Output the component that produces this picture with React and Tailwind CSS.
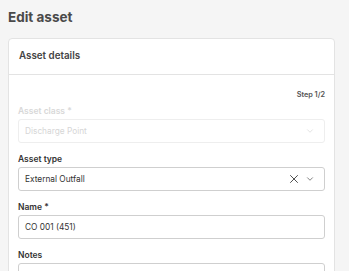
import { ChevronDown, X } from 'lucide-react'

function Field({ label, children }) {
  return (
    <div className="flex flex-col gap-[1px]">
      <label className="text-[8.5px] leading-[14px] font-semibold text-[#333333]">{label}</label>
      {children}
    </div>
  )
}

export default function App() {
  return (
    <div className="min-h-screen bg-[#f5f5f5] pl-2 pt-2 font-['Inter',sans-serif]">
      <h1 className="text-[13.5px] leading-[18px] font-bold text-[#4a4a4a]">Edit asset</h1>

      <div className="mt-3 w-[327px] bg-white border border-[#e3e3e3] rounded-[4px]">
        {/* Header */}
        <div className="h-[36px] flex items-center px-[10px] border-b border-[#e3e3e3]">
          <h2 className="text-[9.8px] font-semibold text-[#444444]">Asset details</h2>
        </div>

        {/* Body */}
        <div className="px-[9px] pt-[13px] pb-4 flex flex-col">
          <p className="text-right text-[7.3px] leading-[14px] font-semibold text-[#555555]">Step 1/2</p>

          <div className="mt-[2px] flex flex-col gap-[9px]">
            <div className="flex flex-col gap-[1px]">
              <label className="text-[8.5px] leading-[14px] font-semibold text-[#d8d8d8]">Asset class *</label>
              <div className="h-[24px] flex items-center justify-between pl-[6px] pr-[9px] border border-[#eeeeee] rounded-[3px]">
                <span className="text-[8.3px] text-[#d6d6d6]">Discharge Point</span>
                <ChevronDown className="w-[10px] h-[10px] text-[#dddddd]" strokeWidth={2} />
              </div>
            </div>

            <Field label="Asset type">
              <div className="h-[24px] flex items-center justify-between pl-[6px] pr-[9px] border border-[#cfcfcf] rounded-[3px]">
                <span className="text-[8.3px] text-[#333333]">External Outfall</span>
                <div className="flex items-center gap-[4px]">
                  <X className="w-[14px] h-[14px] text-[#444444]" strokeWidth={1.6} />
                  <ChevronDown className="w-[10px] h-[10px] text-[#777777]" strokeWidth={2.2} />
                </div>
              </div>
            </Field>

            <Field label="Name *">
              <div className="h-[24px] flex items-center px-[6px] border border-[#cfcfcf] rounded-[3px]">
                <span className="text-[8.3px] text-[#333333]">CO 001 (451)</span>
              </div>
            </Field>

            <Field label="Notes">
              <div className="h-[40px] border border-[#cfcfcf] rounded-[3px]" />
            </Field>
          </div>
        </div>
      </div>
    </div>
  )
}
